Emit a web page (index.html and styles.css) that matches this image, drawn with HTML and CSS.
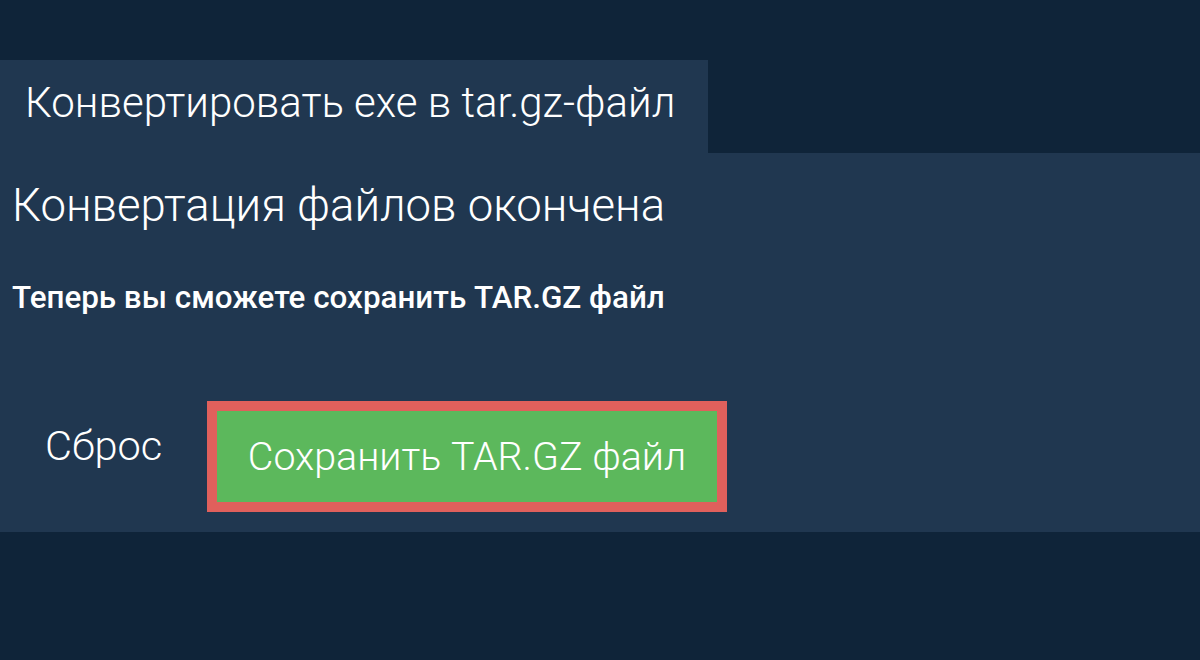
FILE: index.html
```html
<!DOCTYPE html>
<html lang="ru">
<head>
<meta charset="utf-8">
<link rel="stylesheet" href="styles.css">
</head>
<body>
<div class="page">
  <div class="tab">Конвертировать exe в tar.gz-файл</div>
  <div class="panel">
    <h1 class="heading">Конвертация файлов окончена</h1>
    <p class="sub">Теперь вы сможете сохранить TAR.GZ файл</p>
    <div class="actions">
      <span class="reset">Сброс</span>
      <span class="save">Сохранить TAR.GZ файл</span>
    </div>
  </div>
</div>
</body>
</html>
```

FILE: styles.css
```css
html, body {
  margin: 0;
  padding: 0;
  background: #0f2439;
  font-family: Roboto, "Noto Sans", sans-serif;
  color: #ffffff;
}
.page {
  padding-top: 60px;
}
.tab {
  box-sizing: border-box;
  width: 708px;
  height: 93px;
  background: #203750;
  padding: 0 0 8px 25px;
  font-size: 42px;
  font-weight: 300;
  line-height: 85px;
  white-space: nowrap;
}
.panel {
  box-sizing: border-box;
  height: 379px;
  background: #203750;
  padding: 26px 12px 0;
}
.heading {
  margin: 0;
  font-size: 45.5px;
  font-weight: 300;
  line-height: 54px;
  white-space: nowrap;
}
.sub {
  margin: 46px 0 0;
  font-size: 31.4px;
  font-weight: 500;
  line-height: 38px;
  white-space: nowrap;
}
.actions {
  display: flex;
  align-items: center;
  margin-top: 84px;
}
.reset {
  box-sizing: border-box;
  flex: 0 0 195px;
  padding: 0 0 22px 33px;
  font-size: 41.5px;
  font-weight: 300;
}
.save {
  box-sizing: border-box;
  width: 520px;
  height: 111px;
  border: 10px solid #e0605c;
  background: #5cb85c;
  font-size: 39.4px;
  font-weight: 300;
  display: flex;
  align-items: center;
  justify-content: center;
  white-space: nowrap;
}
```
